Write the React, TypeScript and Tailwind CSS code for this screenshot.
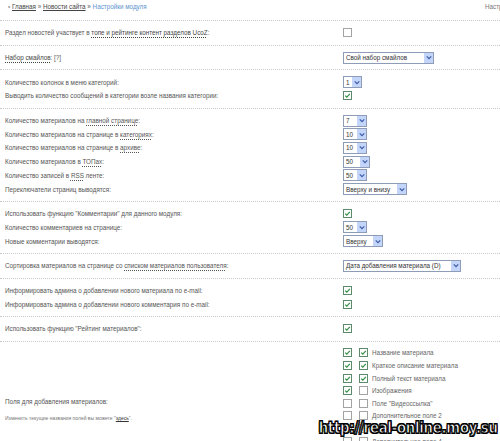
import React from "react";

function Box({ on }: { on?: boolean }) {
  return (
    <span
      className={`inline-flex h-[9px] w-[9px] shrink-0 items-center justify-center border bg-white ${
        on ? "border-[#5d8a6c]" : "border-[#a3a3a3]"
      }`}
    >
      {on && (
        <svg viewBox="0 0 8 8" className="h-[7px] w-[7px]">
          <path d="M1.4 4.1 L3.2 5.9 L6.7 2.1" fill="none" stroke="#2e8b3d" strokeWidth="1.3" />
        </svg>
      )}
    </span>
  );
}

function Select({ value, w }: { value: string; w: string }) {
  return (
    <span className={`inline-flex h-[12px] items-center border border-[#8e9cb8] bg-white ${w}`}>
      <span className="flex-1 truncate pl-[2px] text-[#333]">{value}</span>
      <span className="flex h-full w-[9px] items-center justify-center bg-[#c4d5fa]">
        <svg viewBox="0 0 8 6" className="h-[5px] w-[6px]">
          <path d="M1 1.5 L4 4.5 L7 1.5" fill="none" stroke="#3a5ba8" strokeWidth="1.6" />
        </svg>
      </span>
    </span>
  );
}

function Row({ label, children }: { label: React.ReactNode; children?: React.ReactNode }) {
  return (
    <div className="grid h-[13.7px] grid-cols-[342px_1fr] items-center">
      <div className="pl-[5px]">{label}</div>
      <div className="flex items-center pl-[1px]">{children}</div>
    </div>
  );
}

function Section({ children }: { children: React.ReactNode }) {
  return <div className="border-b border-dotted border-[#c9c9c9] py-[5px]">{children}</div>;
}

const u = "underline decoration-dotted underline-offset-2";

const fields = [
  { t: "Название материала", a: true, b: true },
  { t: "Краткое описание материала", a: true, b: true },
  { t: "Полный текст материала", a: true, b: true },
  { t: "Изображения", a: true, b: false },
  { t: "Поле \"Видеоссылка\"", a: false, b: false },
  { t: "Дополнительное поле 2", a: false, b: false },
  { t: "Дополнительное поле 3", a: false, b: false },
  { t: "Дополнительное поле 4", a: false, b: false },
  { t: "Дополнительное поле 5", a: false, b: false },
  { t: "Дополнительное поле 6", a: false, b: false },
];

export default function App() {
  return (
    <div
      className="relative h-[441px] w-[500px] overflow-hidden whitespace-nowrap bg-white text-[6.3px] leading-[9px] text-[#555]"
      style={{ fontFamily: "'Liberation Sans', Arial, sans-serif" }}
    >
      <div className="flex h-[21px] items-start border-b border-dotted border-[#c9c9c9] pt-[2px]">
        <div className="w-[485px] shrink-0 pl-[8px]">
          <span className="text-[#999]">•</span>{" "}
          <span className="text-[#444] underline">Главная</span> »{" "}
          <span className="text-[#444] underline">Новости сайта</span> »{" "}
          <span className="text-[#5d93cf]">Настройки модуля</span>
        </div>
        <div className="text-[#777]">Настройки модуля</div>
      </div>

      <Section>
        <Row
          label={
            <>
              Раздел новостей участвует в <span className={`text-[#444] ${u}`}>топе и рейтинге контент разделов UcoZ</span>:
            </>
          }
        >
          <Box />
        </Row>
      </Section>

      <Section>
        <Row
          label={
            <>
              <span className={`text-[#444] ${u}`}>Набор смайлов</span>: [?]
            </>
          }
        >
          <Select value="Свой набор смайлов" w="w-[91px]" />
        </Row>
      </Section>

      <Section>
        <Row label="Количество колонок в меню категорий:">
          <Select value="1" w="w-[19px]" />
        </Row>
        <Row label="Выводить количество сообщений в категории возле названия категории:">
          <Box on />
        </Row>
      </Section>

      <Section>
        <Row label={<>Количество материалов на <span className={u}>главной странице</span>:</>}>
          <Select value="7" w="w-[24px]" />
        </Row>
        <Row label={<>Количество материалов на странице в <span className={u}>категориях</span>:</>}>
          <Select value="10" w="w-[24px]" />
        </Row>
        <Row label={<>Количество материалов на странице в <span className={u}>архиве</span>:</>}>
          <Select value="10" w="w-[24px]" />
        </Row>
        <Row label={<>Количество материалов в <span className={u}>ТОПах</span>:</>}>
          <Select value="50" w="w-[27px]" />
        </Row>
        <Row label={<>Количество записей в <span className={u}>RSS</span> ленте:</>}>
          <Select value="50" w="w-[24px]" />
        </Row>
        <Row label="Переключатели страниц выводятся:">
          <Select value="Вверху и внизу" w="w-[64px]" />
        </Row>
      </Section>

      <Section>
        <Row label={'Использовать функцию "Комментарии" для данного модуля:'}>
          <Box on />
        </Row>
        <Row label="Количество комментариев на странице:">
          <Select value="50" w="w-[24px]" />
        </Row>
        <Row label="Новые комментарии выводятся:">
          <Select value="Вверху" w="w-[40px]" />
        </Row>
      </Section>

      <Section>
        <Row label={<>Сортировка материалов на странице со <span className={u}>списком материалов пользователя</span>:</>}>
          <Select value="Дата добавления материала (D)" w="w-[118px]" />
        </Row>
      </Section>

      <Section>
        <Row label="Информировать админа о добавлении нового материала по e-mail:">
          <Box on />
        </Row>
        <Row label="Информировать админа о добавлении нового комментария по e-mail:">
          <Box on />
        </Row>
      </Section>

      <Section>
        <Row label={'Использовать функцию "Рейтинг материалов":'}>
          <Box on />
        </Row>
      </Section>

      <div className="grid grid-cols-[342px_1fr] items-center py-[5px]">
        <div className="flex flex-col gap-[8px] pl-[5px]">
          <div className="leading-[8px]">Поля для добавления материалов:</div>
          <div className="text-[5px] leading-[8px] text-[#777]">
            Изменить текущие названия полей вы можете "<span className="text-[#333] underline">здесь</span>".
          </div>
        </div>
        <div className="flex flex-col pl-[1px]">
          {fields.map((f) => (
            <div key={f.t} className="flex h-[12.6px] items-center gap-[7px]">
              <Box on={f.a} />
              <div className="flex items-center gap-[4px]">
                <Box on={f.b} />
                <span className="text-[#666]">{f.t}</span>
              </div>
            </div>
          ))}
        </div>
      </div>

      <div
        className="absolute right-[2px] top-[420px] origin-right scale-x-[0.83] text-[16px] font-bold leading-none tracking-[-0.3px] text-white"
        style={{
          fontFamily: "'DejaVu Sans', sans-serif",
          WebkitTextStroke: "1px #000",
          textShadow: "1px 1px 0 #000, -1px -1px 0 #000, 1px -1px 0 #000, -1px 1px 0 #000",
        }}
      >
        http://real-online.moy.su
      </div>
    </div>
  );
}
